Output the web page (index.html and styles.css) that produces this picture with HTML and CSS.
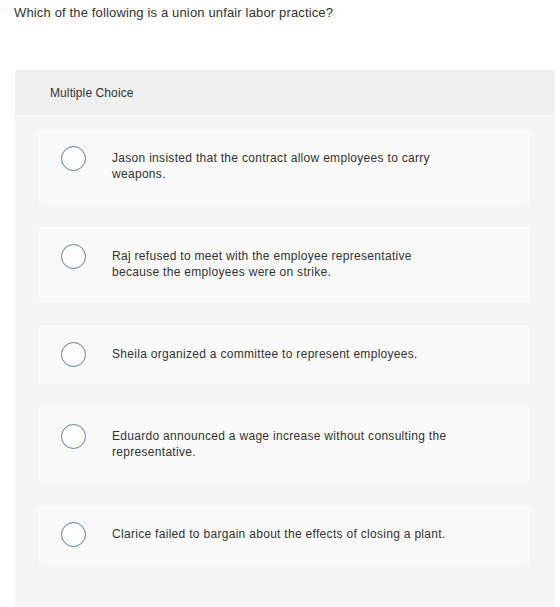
FILE: index.html
```html
<!DOCTYPE html>
<html>
<head>
    <title>Question</title>
    <link rel="stylesheet" href="styles.css">
</head>
<body>
    <div class="question">Which of the following is a union unfair labor practice?</div>

    <div class="panel">
        <div class="panel-head">Multiple Choice</div>
        <div class="choices">
            <label class="choice">
                <span class="radio"></span>
                <span class="choice-text">Jason insisted that the contract allow employees to carry weapons.</span>
            </label>
            <label class="choice">
                <span class="radio"></span>
                <span class="choice-text">Raj refused to meet with the employee representative because the employees were on strike.</span>
            </label>
            <label class="choice">
                <span class="radio"></span>
                <span class="choice-text">Sheila organized a committee to represent employees.</span>
            </label>
            <label class="choice">
                <span class="radio"></span>
                <span class="choice-text">Eduardo announced a wage increase without consulting the representative.</span>
            </label>
            <label class="choice">
                <span class="radio"></span>
                <span class="choice-text">Clarice failed to bargain about the effects of closing a plant.</span>
            </label>
        </div>
    </div>
</body>
</html>
```

FILE: styles.css
```css
body {
    margin: 0;
    padding: 0;
    background-color: #fff;
    font-family: "Liberation Sans", Arial, sans-serif;
    color: #333;
}

.question {
    font-size: 13px;
    line-height: 16px;
    letter-spacing: 0.15px;
    padding: 5px 14px 0;
}

.panel {
    margin: 49px 5px 0 15px;
    min-height: 560px;
    background-color: #f5f5f5;
    border-radius: 4px 4px 0 0;
}

.panel-head {
    height: 45px;
    padding-left: 35px;
    font-size: 12px;
    line-height: 46px;
    letter-spacing: 0.1px;
    background-color: #efefef;
    border-radius: 4px 4px 0 0;
}

.choices {
    display: flex;
    flex-direction: column;
    gap: 23px;
    padding: 14px 25px 0 23px;
}

.choice {
    display: flex;
    align-items: flex-start;
    gap: 26px;
    padding: 21px 20px 22px 23px;
    background-color: #fafafa;
    border-radius: 4px;
    cursor: pointer;
}

.radio {
    flex: none;
    box-sizing: border-box;
    width: 25px;
    height: 25px;
    margin: -4px 0 -5px;
    border: 1.5px solid #5b7fb0;
    border-radius: 50%;
    background-color: #fff;
}

.choice-text {
    max-width: 338px;
    font-size: 12px;
    line-height: 16px;
    letter-spacing: 0.3px;
}
```
